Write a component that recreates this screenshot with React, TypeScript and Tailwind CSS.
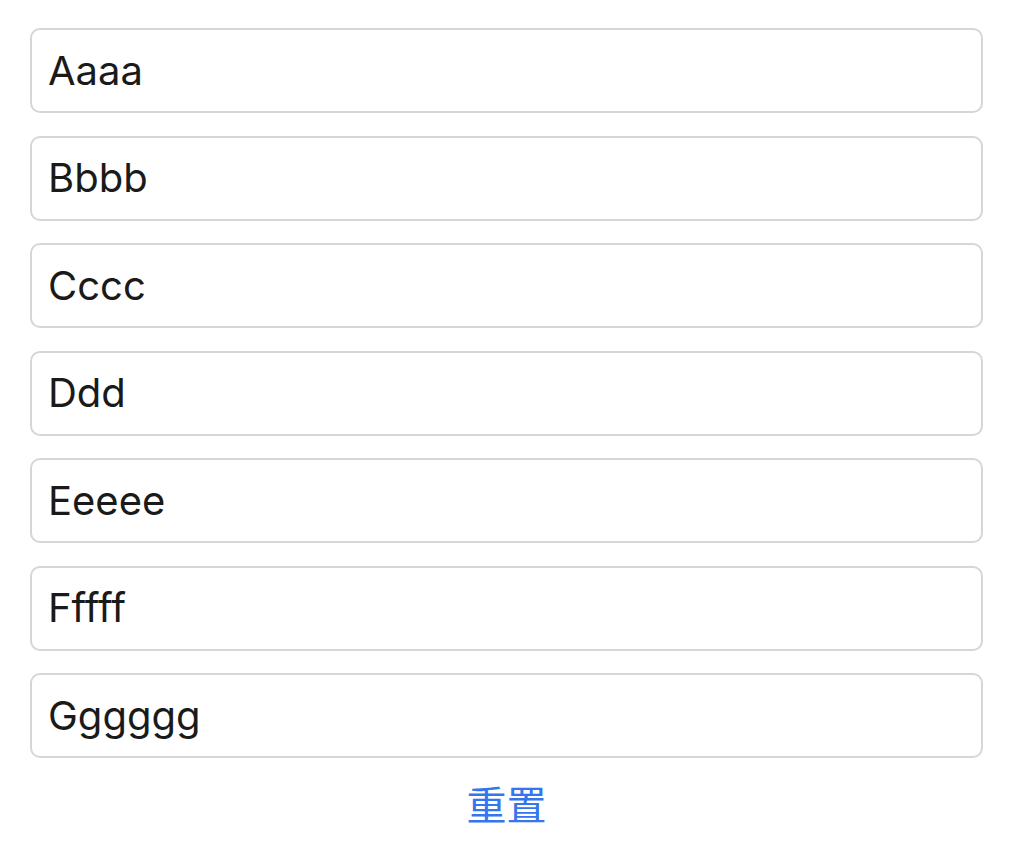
import React from 'react';

const items = ['Aaaa', 'Bbbb', 'Cccc', 'Ddd', 'Eeeee', 'Fffff', 'Gggggg'];

export default function App() {
  return (
    <div className="min-h-[845px] bg-white pt-[28px] pl-[30px] font-['Inter','Noto_Sans_CJK_SC',sans-serif]">
      <div className="w-[953px] flex flex-col gap-[22.5px]">
        {items.map((item) => (
          <div
            key={item}
            className="h-[85px] flex items-center px-[16px] border-2 border-[#d6d6d6] rounded-[10px] bg-white text-[40px] text-[#1a1a1a]"
          >
            {item}
          </div>
        ))}
      </div>
      <div className="w-[953px] mt-[28px] flex justify-center">
        <button className="text-[40px] leading-[40px] text-[#3575ee]">重置</button>
      </div>
    </div>
  );
}
